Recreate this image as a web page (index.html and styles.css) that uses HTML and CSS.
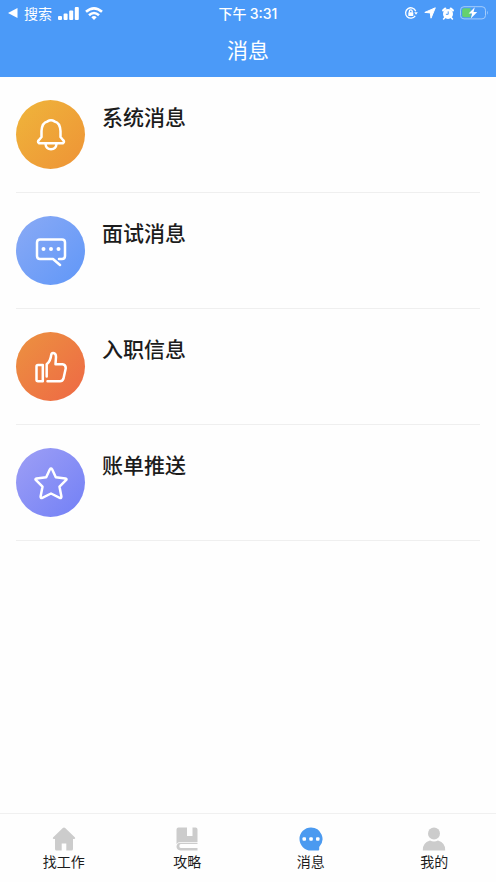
FILE: index.html
```html
<!DOCTYPE html>
<html lang="zh-CN">
<head>
<meta charset="utf-8">
<meta name="viewport" content="width=device-width, initial-scale=1">
<title>消息</title>
<link rel="stylesheet" href="styles.css">
</head>
<body>
<div class="app">
  <header class="header">
    <div class="status">
      <div class="status-side">
        <svg width="10" height="10" viewBox="0 0 10 10" fill="currentColor" aria-hidden="true"><path d="M0 5 9.500 0V10Z"/></svg>
        <a class="back" href="#">搜索</a>
        <svg class="signal" width="21" height="13" viewBox="0 0 21 13" fill="currentColor" aria-hidden="true"><rect x="0" y="9" width="4" height="4" rx="1"/><rect x="5.600" y="6.500" width="4" height="6.500" rx="1"/><rect x="11.200" y="3.500" width="4" height="9.500" rx="1"/><rect x="16.800" y="0" width="4" height="13" rx="1"/></svg>
        <svg class="wifi" width="18" height="13" viewBox="0 0 18 13" fill="none" stroke="currentColor" stroke-width="2.600" aria-hidden="true"><path d="M1 4.800Q9-2.200 17 4.800M4 8.200Q9 3.800 14 8.200"/><path d="M6.300 10.200Q9 7.800 11.700 10.200L9 13Z" fill="currentColor" stroke="none"/></svg>
      </div>
      <div class="time">下午 <span class="clock">3:31</span></div>
      <div class="status-side status-right">
        <svg width="14" height="14" viewBox="0 0 14 14" fill="none" stroke="currentColor" stroke-width="1.300" aria-hidden="true"><path d="M11.200 9.800A5.200 5.200 0 1 1 11.700 5.200"/><path d="M10.200 6.200H13.800L12 8.700Z" fill="currentColor" stroke="none"/><rect x="4.300" y="6.200" width="5" height="3.800" rx=".6" fill="currentColor" stroke="none"/><path d="M5.400 6.400V5.200a1.400 1.400 0 0 1 2.800 0V6.400"/></svg>
        <svg width="12" height="12" viewBox="0 0 12 12" fill="currentColor" stroke="currentColor" stroke-linejoin="round" aria-hidden="true"><path d="M11.300.8 7 11.200 6.300 5.900.8 5.400Z"/></svg>
        <svg width="12" height="13" viewBox="0 0 12 13" fill="none" stroke="currentColor" aria-hidden="true"><circle cx="6" cy="7" r="5" fill="currentColor" stroke="none"/><path d="M1.200 3.400 3.200 1.600M10.800 3.400 8.800 1.600" stroke-width="2.200" stroke-linecap="round"/><path d="M2.700 10.700 1.600 12M9.300 10.700 10.400 12" stroke-width="1.600" stroke-linecap="round"/><path class="clock-hands" d="M6.200 4.400V7.300H3.900"/></svg>
        <svg class="battery" width="28" height="14" viewBox="0 0 28 14" aria-hidden="true"><rect class="battery-shell" x=".5" y=".7" width="25" height="12.200" rx="3.500"/><path class="battery-level" d="M4 2.300H10.500V11.300H4Q2.200 11.300 2.200 9.500V4Q2.200 2.300 4 2.300Z"/><path class="battery-cap" d="M27 4.800Q28.600 6.800 27 8.800Z"/><path class="bolt" d="M14.800 1.200 8.600 7.600H12.100L10.800 12.600 17.200 5.900H13.500Z"/></svg>
      </div>
    </div>
    <h1 class="title">消息</h1>
  </header>

  <main class="list">
    <a class="item" href="#">
      <span class="avatar system"><svg width="30" height="34" viewBox="0 0 30 34" aria-hidden="true"><path d="M3 25.200H27Q29 24 27 22L24.500 19V13Q24 4.500 18.500 3.400Q15 1 11.500 3.400Q6 4.500 5.500 13V19L3 22Q1 24 3 25.200ZM9.500 26Q10 31.200 15 31.200T20.500 26"/></svg></span>
      <span class="name">系统消息</span>
    </a>
    <a class="item" href="#">
      <span class="avatar interview"><svg width="32" height="32" viewBox="0 0 32 32" aria-hidden="true"><path d="M24 24H27Q30 24 30 21V7.500Q30 4.500 27 4.500H5Q2 4.500 2 7.500V21Q2 24 5 24H18L25 30"/><path class="dots" d="M8.500 14V14.010M16 14V14.010M23.500 14V14.010"/></svg></span>
      <span class="name">面试消息</span>
    </a>
    <a class="item" href="#">
      <span class="avatar onboard"><svg width="32" height="32" viewBox="0 0 32 32" aria-hidden="true"><path d="M3 14H7.800V30.200H3Q1.500 30.200 1.500 28.700V15.500Q1.500 14 3 14ZM12.500 30.200H25Q27.500 30.200 28.500 27.500L30.700 17.500Q31 13.500 27.500 13.200H20.500L21 6Q21 2 18.300 1.900Q16.500 1.800 16.200 4Q15.500 10.200 11.700 13.300V25.500"/></svg></span>
      <span class="name">入职信息</span>
    </a>
    <a class="item" href="#">
      <span class="avatar bill"><svg width="34" height="34" viewBox="0 0 34 34" aria-hidden="true"><path d="M15.900 3.300Q17 1.500 18.100 3.300L21.800 11.200 31.400 12.400Q33.300 12.800 32 14.200L25.500 20.700 27.400 30.600Q27.400 32.600 25.700 31.800L17 27.500 8.300 31.800Q6.600 32.600 6.600 30.600L8.500 20.700 2 14.200Q.7 12.800 2.600 12.400L12.200 11.200Z"/></svg></span>
      <span class="name">账单推送</span>
    </a>
  </main>

  <nav class="tabs">
    <a class="tab" href="#"><svg width="24" height="24" viewBox="0 0 24 24" fill="currentColor" aria-hidden="true"><path d="M10.800 1Q12 0 13.200 1L23 10.500Q23.700 11.700 22.300 12H21V22Q21 23.500 19.500 23.500H14.300V16.500H9.700V23.500H4.500Q3 23.500 3 22V12H1.700Q.3 11.700 1 10.500Z"/></svg>找工作</a>
    <a class="tab" href="#"><svg width="24" height="24" viewBox="0 0 24 24" fill="currentColor" aria-hidden="true"><path d="M3.500.5H12V9H17.500V.5H20.500Q22.500.5 22.500 2.500V15H5.500Q2.800 15 1.500 17V2.500Q1.500.5 3.500.5Z"/><path d="M22.500 17H5.800Q4.300 17.200 4.300 19T5.800 21H22.500V23.500H5.500Q1.500 23 1.500 19.500Q1.700 16 5.500 15.700H22.500Z"/></svg>攻略</a>
    <a class="tab active" href="#" aria-current="page"><svg width="24" height="24" viewBox="0 0 24 24" aria-hidden="true"><path fill="currentColor" d="M12 .5A11.500 11.500 0 0 1 20.200 20V22.500Q20.200 23.500 19.200 23.500H12A11.500 11.500 0 0 1 12 .5Z"/><g fill="#fff"><rect x="3.500" y="10.300" width="3.500" height="3.500" rx="1"/><rect x="10.300" y="10.300" width="3.500" height="3.500" rx="1"/><rect x="17" y="10.300" width="3.500" height="3.500" rx="1"/></g></svg>消息</a>
    <a class="tab" href="#"><svg width="24" height="24" viewBox="0 0 24 24" fill="currentColor" aria-hidden="true"><circle cx="12" cy="6.500" r="6"/><path d="M.8 23.500Q.2 16 8 13.500Q12 15.500 16 13.500Q23.800 16 23.200 23.500Z"/></svg>我的</a>
  </nav>
</div>
</body>
</html>
```
FILE: styles.css
```css
* {
  box-sizing: border-box;
}

body {
  margin: 0;
  background: #fefefe;
  color: #1c1c1c;
  font-family: "Noto Sans CJK SC", sans-serif;
}

a {
  color: inherit;
  text-decoration: none;
}

svg {
  display: block;
  flex: none;
}

.app {
  display: flex;
  flex-direction: column;
  min-height: 100vh;
}

.header {
  padding-bottom: 13px;
  background: #4b9af8;
  color: #fff;
}

.status {
  display: grid;
  grid-template-columns: 1fr auto 1fr;
  align-items: center;
  height: 26px;
  padding: 0 8px;
  font-size: 14px;
  line-height: 20px;
}

.status-side {
  display: flex;
  align-items: center;
  gap: 6px;
}

.status-right {
  justify-content: flex-end;
}

.wifi {
  overflow: visible;
}

.time {
  font-weight: 500;
}

.clock {
  font-family: Inter, sans-serif;
}

.clock-hands {
  stroke: #4b9af8;
}

.battery-shell {
  fill: none;
  stroke: #a5cdfb;
}

.battery-level {
  fill: #65d16f;
}

.battery-cap {
  fill: #a5cdfb;
}

.bolt {
  fill: #fff;
}

.title {
  margin: 0;
  padding-top: 8px;
  font-size: 21px;
  font-weight: 400;
  line-height: 30px;
  text-align: center;
}

.list {
  flex: 1;
  padding: 0 16px;
}

.item {
  display: flex;
  gap: 17px;
  padding: 23px 0;
  border-bottom: 1px solid #efefef;
}

.avatar {
  display: grid;
  place-items: center;
  flex: none;
  width: 69px;
  height: 69px;
  border-radius: 50%;
}

.avatar svg {
  fill: none;
  stroke: #fff;
  stroke-width: 2.5px;
  stroke-linecap: round;
  stroke-linejoin: round;
}

.avatar .dots {
  stroke-width: 4px;
}

.system {
  background: linear-gradient(135deg, #efb53b, #ee9336);
}

.interview {
  background: linear-gradient(135deg, #8aaaf5, #6097f8);
}

.onboard {
  background: linear-gradient(135deg, #ec9240, #ee6845);
}

.bill {
  background: linear-gradient(135deg, #9e9ff5, #7280f6);
}

.name {
  font-size: 21px;
  font-weight: 500;
  line-height: 32px;
}

.tabs {
  display: grid;
  grid-template-columns: repeat(4, 1fr);
  padding: 13px 0 11px 2px;
  border-top: 1px solid #f0f0f0;
}

.tab {
  display: flex;
  flex-direction: column;
  align-items: center;
  font-size: 14px;
  line-height: 20px;
}

.tab svg {
  color: #ccc;
}

.tab.active svg {
  color: #4b9af0;
}
```
